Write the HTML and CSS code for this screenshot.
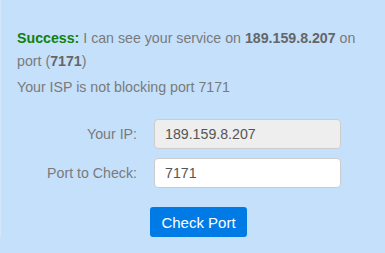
FILE: index.html
```html
<!DOCTYPE html>
<html>
<head>
<meta charset="utf-8">
<link rel="stylesheet" href="styles.css">
</head>
<body>
<div class="panel">
  <p class="result"><span class="ok">Success:</span> I can see your service on <b>189.159.8.207</b> on port (<b>7171</b>)</p>
  <p class="note">Your ISP is not blocking port 7171</p>
  <form class="form">
    <div class="row">
      <label class="lbl">Your IP:</label>
      <input class="field field-ro" type="text" value="189.159.8.207" readonly>
    </div>
    <div class="row">
      <label class="lbl">Port to Check:</label>
      <input class="field" type="text" value="7171">
    </div>
    <div class="actions">
      <button class="btn" type="button">Check Port</button>
    </div>
  </form>
</div>
</body>
</html>
```

FILE: styles.css
```css
html, body {
  margin: 0;
  padding: 0;
  background: #c5e0fb;
}
body {
  font-family: "Liberation Sans", Arial, sans-serif;
  color: #7a7a7a;
  width: 385px;
  height: 253px;
  overflow: hidden;
}
.panel {
  padding: 27px 16px 0 16px;
  border-left: 1px solid #d3e7fb;
}
.result,
.note {
  margin: 0;
  font-size: 14.2px;
  line-height: 23px;
}
.note {
  margin-top: 3px;
}
.ok {
  color: #108010;
  font-weight: bold;
}
.result b {
  color: #666;
}
.form {
  margin-top: 20px;
}
.row {
  display: flex;
  align-items: center;
  margin-bottom: 9px;
}
.lbl {
  width: 120px;
  text-align: right;
  font-size: 14.2px;
  color: #7a7a7a;
  margin-right: 17px;
}
.field {
  box-sizing: border-box;
  width: 187px;
  height: 30px;
  border: 1px solid #ccc;
  border-radius: 4px;
  padding: 0 10px;
  font-family: "Liberation Sans", Arial, sans-serif;
  font-size: 14.2px;
  color: #555;
  background: #fff;
  outline: none;
}
.field-ro {
  background: #eee;
}
.actions {
  padding-left: 133px;
  margin-top: 19px;
}
.btn {
  background: #007be5;
  color: #fff;
  border: 0;
  border-radius: 3px;
  font-family: "Liberation Sans", Arial, sans-serif;
  font-size: 15px;
  height: 30px;
  width: 97px;
  padding: 0;
}
```
